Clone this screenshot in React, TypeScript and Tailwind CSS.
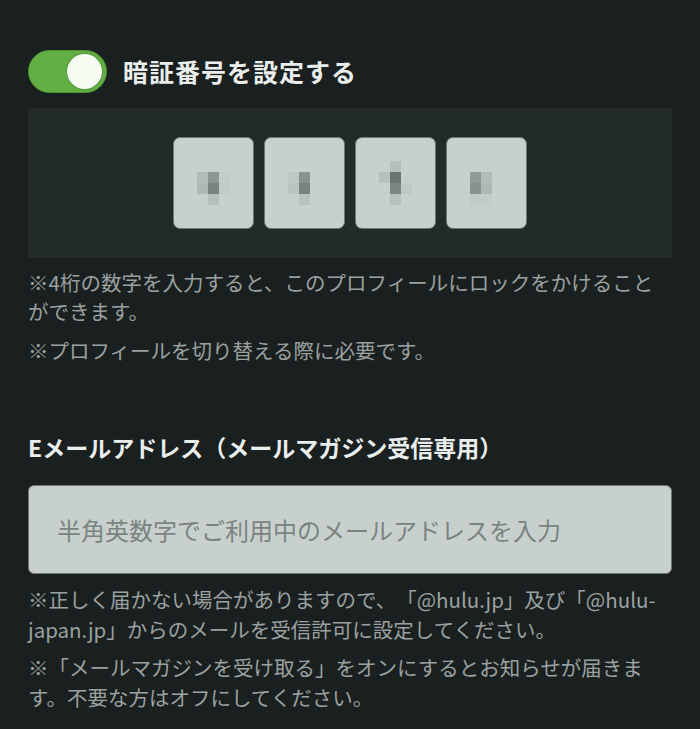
import React from "react";

const font = { fontFamily: '"Noto Sans CJK JP", "Noto Sans", sans-serif' };

// blurred digit mosaic inside each pin box (cells: [col,row,shade])
const mosaics: [number, number, string][][] = [
  [
    [0, 1, "bg-[#b4bcba]"], [1, 1, "bg-[#8e9694]"], [2, 1, "bg-[#c4ccca]"],
    [0, 2, "bg-[#b0b8b6]"], [1, 2, "bg-[#7c8482]"], [2, 2, "bg-[#c2cac8]"],
    [1, 3, "bg-[#b8c0be]"],
  ],
  [
    [0, 1, "bg-[#c0c8c6]"], [1, 1, "bg-[#8a9290]"],
    [0, 2, "bg-[#bcc4c2]"], [1, 2, "bg-[#7a8280]"],
    [1, 3, "bg-[#bac2c0]"],
  ],
  [
    [1, 0, "bg-[#b6bebc]"], [0, 1, "bg-[#b8c0be]"], [1, 1, "bg-[#6c7472]"],
    [1, 2, "bg-[#7e8684]"], [2, 2, "bg-[#c0c8c6]"],
    [1, 3, "bg-[#b8c0be]"],
  ],
  [
    [0, 1, "bg-[#929a98]"], [1, 1, "bg-[#b4bcba]"],
    [0, 2, "bg-[#8a9290]"], [1, 2, "bg-[#b0b8b6]"],
    [0, 3, "bg-[#c2cac8]"], [1, 3, "bg-[#c4ccca]"],
  ],
];

function PinBox({ cells }: { cells: [number, number, string][] }) {
  return (
    <div className="w-[81px] h-[92px] rounded-[7px] bg-[#c8d0ce] border-[1.5px] border-[#6e7674] flex items-center justify-center">
      <div className="grid grid-cols-[repeat(3,11px)] grid-rows-[repeat(4,11px)]">
        {Array.from({ length: 12 }).map((_, i) => {
          const c = i % 3;
          const r = Math.floor(i / 3);
          const hit = cells.find(([cc, rr]) => cc === c && rr === r);
          return <div key={i} className={hit ? hit[2] : ""} />;
        })}
      </div>
    </div>
  );
}

export default function App() {
  return (
    <div
      className="w-[700px] h-[729px] bg-[#1a2020] overflow-hidden px-[28px] pt-[50px] [text-spacing-trim:space-all]"
      style={font}
    >
      {/* PIN toggle */}
      <div className="flex items-center gap-[16px] h-[43px]">
        <div className="relative w-[79px] h-[43px] rounded-full bg-[#62b043] border border-[#4f9236]">
          <div className="absolute right-[4px] top-[3px] w-[35px] h-[35px] rounded-full bg-[#f6fbf2] shadow-[0_0_2px_rgba(0,0,0,0.4)]" />
        </div>
        <span className="text-[25px] font-bold text-[#e9eeec] tracking-[1px] leading-none">
          暗証番号を設定する
        </span>
      </div>

      <div className="mt-[15px] h-[150px] bg-[#232b2a] flex items-center justify-center gap-[10px]">
        {mosaics.map((m, i) => (
          <PinBox key={i} cells={m} />
        ))}
      </div>

      <div className="mt-[10px] text-[20.5px] leading-[29px] text-[#9ba1a0]">
        <p>※4桁の数字を入力すると、このプロフィールにロックをかけることができます。</p>
        <p className="mt-[10px]">※プロフィールを切り替える際に必要です。</p>
      </div>

      {/* Email */}
      <h2 className="mt-[66px] text-[23px] font-bold text-[#e9eeec] leading-[32px]">
        Eメールアドレス（メールマガジン受信専用）
      </h2>
      <div className="mt-[22px] h-[89px] rounded-[6px] bg-[#c8d0ce] border-[1.5px] border-[#6e7674] flex items-center px-[28px]">
        <span className="text-[24px] text-[#7b8381]">半角英数字でご利用中のメールアドレスを入力</span>
      </div>

      <div className="mt-[10px] text-[20.5px] leading-[30px] text-[#9ba1a0]">
        <p>※正しく届かない場合がありますので、「@hulu.jp」及び「@hulu-japan.jp」からのメールを受信許可に設定してください。</p>
        <p className="mt-[8px]">※「メールマガジンを受け取る」をオンにするとお知らせが届きます。不要な方はオフにしてください。</p>
      </div>
    </div>
  );
}
